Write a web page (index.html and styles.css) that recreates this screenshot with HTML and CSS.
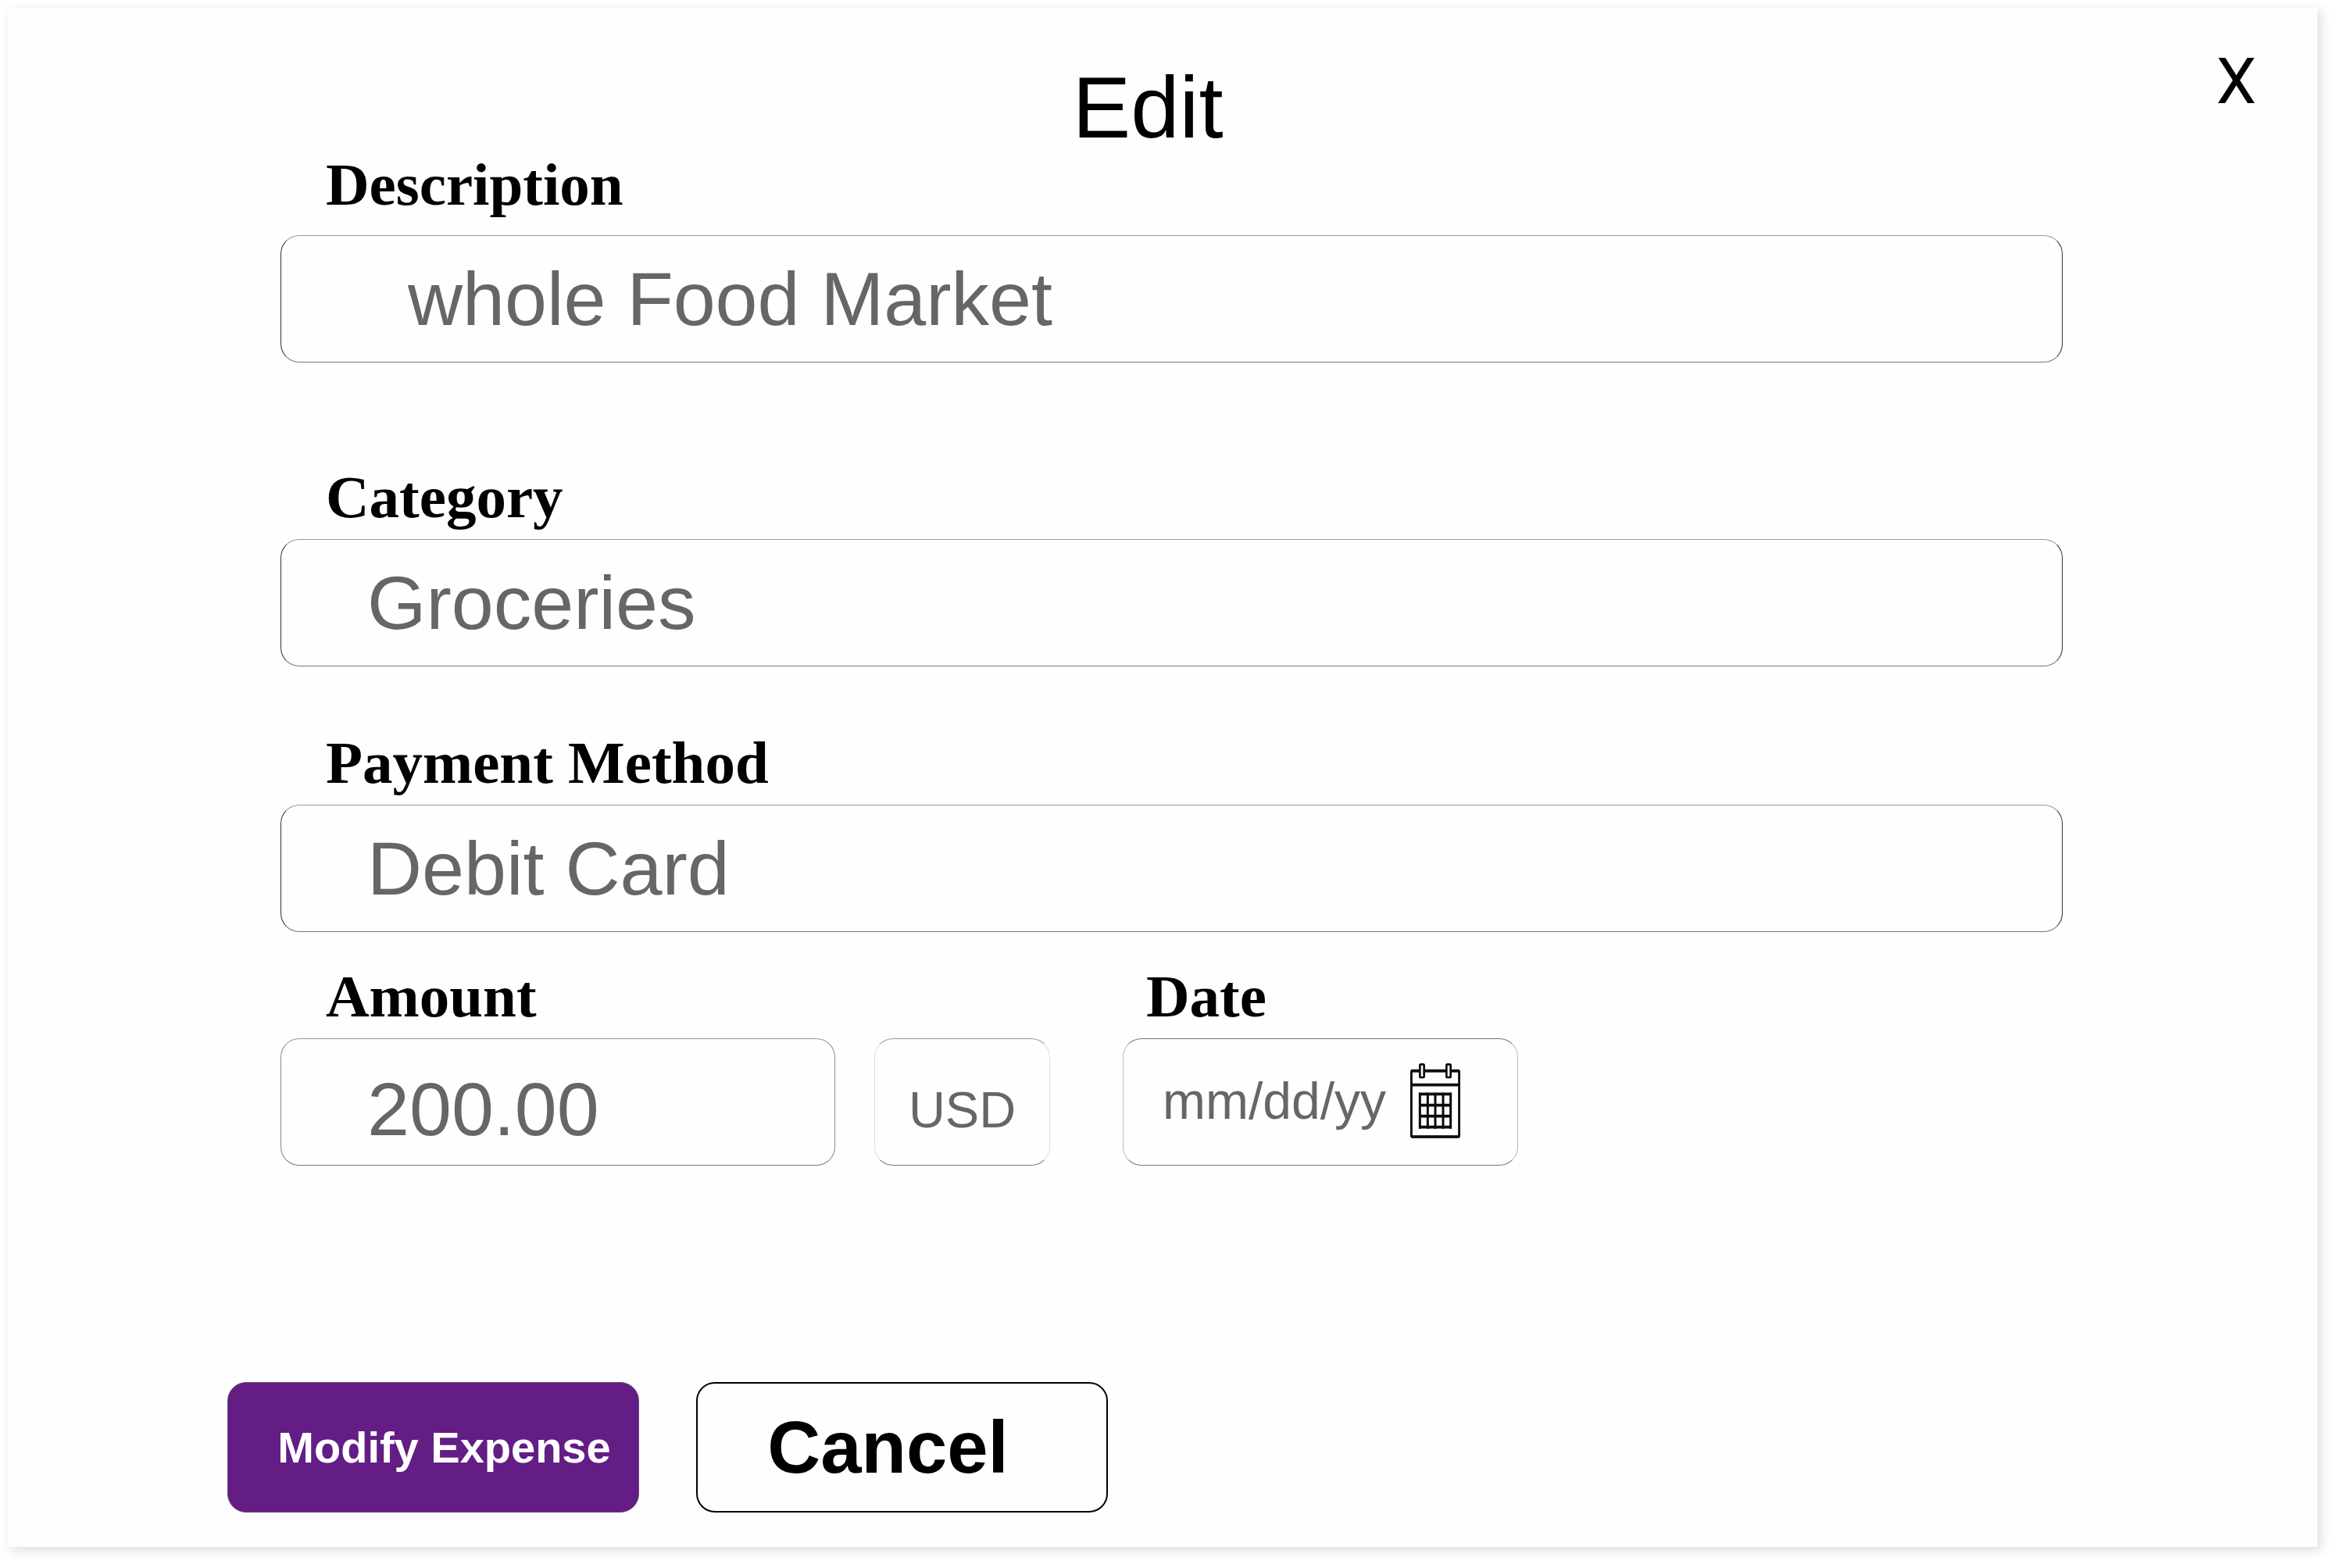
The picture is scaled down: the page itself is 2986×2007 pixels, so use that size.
FILE: index.html
```html
<!DOCTYPE html>
<html lang="en">
<head>
  <meta charset="utf-8">
  <meta name="viewport" content="width=device-width, initial-scale=1">
  <title>Edit expense</title>
  <link rel="stylesheet" href="styles.css">
</head>
<body>
  <main class="dialog" role="dialog" aria-labelledby="dialog-title">
    <header class="dialog-header">
      <h1 class="dialog-title" id="dialog-title">Edit</h1>
      <button class="close" type="button">X</button>
    </header>
    <form class="form" id="expense-form">
      <div class="field field-description">
        <label class="label" for="description">Description</label>
        <input class="box box-indented" id="description" type="text" value="whole Food Market">
      </div>
      <div class="field field-category">
        <label class="label" for="category">Category</label>
        <input class="box" id="category" type="text" value="Groceries">
      </div>
      <div class="field field-payment">
        <label class="label" for="payment">Payment Method</label>
        <input class="box" id="payment" type="text" value="Debit Card">
      </div>
      <div class="row">
        <div class="field">
          <label class="label" for="amount">Amount</label>
          <div class="money">
            <input class="box box-amount" id="amount" type="text" inputmode="decimal" value="200.00">
            <input class="box box-currency" type="text" aria-label="Currency" value="USD">
          </div>
        </div>
        <div class="field">
          <label class="label label-date" for="date">Date</label>
          <div class="box date">
            <input class="date-input" id="date" type="text" placeholder="mm/dd/yy">
            <button class="date-button" type="button" aria-label="Open calendar">
              <svg class="calendar" viewBox="75 58 192 288" fill="none" stroke="#080c0b" aria-hidden="true">
                <rect x="79" y="87" width="184" height="253" rx="4" stroke-width="9"/>
                <path d="M79 141H263" stroke-width="11"/>
                <path d="M79 87H263M79 340H263" stroke-width="11"/>
                <rect x="112" y="62" width="16" height="50" rx="4" fill="#fefefe" stroke-width="8"/>
                <rect x="214" y="62" width="16" height="50" rx="4" fill="#fefefe" stroke-width="8"/>
                <path d="M108 176H234M108 219H234M108 261H234M108 303H234" stroke-width="11"/>
                <path d="M112 171V309M142 171V309M171 171V309M201 171V309M230 171V309" stroke-width="9"/>
              </svg>
            </button>
          </div>
        </div>
      </div>
    </form>
    <footer class="actions">
      <button class="button button-primary" type="submit" form="expense-form">Modify Expense</button>
      <button class="button button-secondary" type="button">Cancel</button>
    </footer>
  </main>
</body>
</html>
```
FILE: styles.css
```css
* {
  box-sizing: border-box;
}

body {
  margin: 0;
  padding: 10px 20px 27px 10px;
  background: #fff;
  color: #000;
  font-family: "Liberation Sans", Arial, sans-serif;
}

.dialog {
  background: #fefefe;
  box-shadow: 4px 4px 14px rgba(0, 0, 0, 0.14);
}

.dialog-header {
  display: grid;
  grid-template-columns: 1fr auto 1fr;
  align-items: start;
  padding: 54px 78px 0 40px;
}

.dialog-title {
  grid-column: 2;
  margin: 0;
  padding-top: 20px;
  font-size: 112px;
  font-weight: 400;
  line-height: 108px;
}

.close {
  justify-self: end;
  padding: 0;
  border: 0;
  background: none;
  color: #000;
  font-family: Roboto, sans-serif;
  font-size: 82px;
  line-height: 80px;
}

.form {
  padding: 0 326px 0 349px;
}

.field {
  display: flex;
  flex-direction: column;
  gap: 10px;
  min-width: 0;
}

.field-description {
  gap: 21px;
  margin-bottom: 128px;
}

.field-category {
  margin-bottom: 79px;
}

.field-payment {
  margin-bottom: 38px;
}

.label {
  padding-left: 58px;
  font-family: "Liberation Serif", "Times New Roman", serif;
  font-size: 77px;
  font-weight: 700;
  line-height: 88px;
}

.label-date {
  padding-left: 30px;
}

.box {
  width: 100%;
  min-width: 0;
  height: 163px;
  padding: 0 110px;
  border: 1px solid;
  border-color: #999 #333 #777;
  border-radius: 24px;
  background: #fefefe;
  color: #666;
  font-family: inherit;
  font-size: 97px;
}

.box-indented {
  padding-left: 162px;
}

.row {
  display: grid;
  grid-template-columns: 985fr 506fr 604fr;
  gap: 93px;
}

.money {
  display: grid;
  grid-template-columns: 710fr 225fr;
  gap: 50px;
}

.box-amount {
  padding-top: 18px;
  border-color: #999 #888 #777;
}

.box-currency {
  padding: 20px 0 0;
  border-color: #999 #ddd #777;
  font-size: 65px;
  text-align: center;
}

.date {
  display: flex;
  align-items: center;
  padding: 0 73px 4px 50px;
  border-color: #777 #bbb;
}

.date-input {
  flex: 1;
  min-width: 0;
  padding: 0;
  border: 0;
  background: none;
  color: #666;
  font-family: inherit;
  font-size: 66px;
}

.date-input::placeholder {
  color: #666;
  opacity: 1;
}

.date-button {
  display: flex;
  padding: 0;
  border: 0;
  background: none;
}

.calendar {
  width: 64px;
  height: 96px;
}

.actions {
  display: flex;
  gap: 73px;
  padding: 277px 281px 44px;
}

.button {
  width: 527px;
  height: 167px;
  border-radius: 24px;
  font-family: inherit;
  font-weight: 700;
}

.button-primary {
  padding: 0 0 0 28px;
  border: 1px solid #6a4a7c;
  background: #631d84;
  color: #fff;
  font-size: 56px;
}

.button-secondary {
  padding: 0 36px 0 0;
  border: 2px solid #000;
  background: #fefefe;
  color: #000;
  font-size: 94px;
}
```
